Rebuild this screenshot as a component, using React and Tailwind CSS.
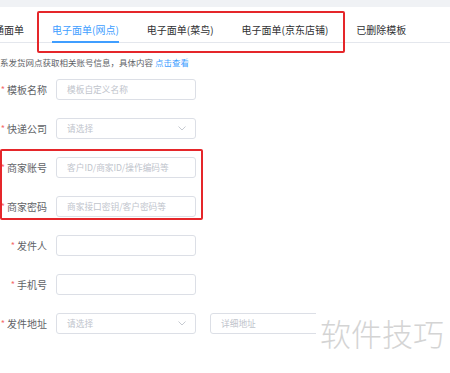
import React from "react";

const tabs = ["普通面单", "电子面单(网点)", "电子面单(菜鸟)", "电子面单(京东店铺)", "已删除模板"];

const Chevron = () => (
  <svg width="8" height="5" viewBox="0 0 8 5" className="ml-auto">
    <polyline points="0.5,0.5 4,4 7.5,0.5" fill="none" stroke="#c0c4cc" strokeWidth="0.9" />
  </svg>
);

const Field = ({ label, placeholder, select }) => (
  <div className="flex items-center">
    <div className="w-[47px] flex justify-end items-center text-[10px] text-[#606266] whitespace-nowrap">
      <span className="text-[#f56c6c] mr-[2px] text-[9px]">*</span>
      {label}
    </div>
    <div className="ml-[9px] w-[140px] h-[21px] flex items-center border border-[#dcdfe6] rounded-[3px] pl-[10px] pr-[9px] bg-white">
      <span className="text-[8.7px] text-[#c0c4cc] whitespace-nowrap">{placeholder}</span>
      {select && <Chevron />}
    </div>
  </div>
);

export default function App() {
  return (
    <div
      className="relative w-[450px] h-[373px] bg-white overflow-hidden"
      style={{ fontFamily: '"Noto Sans CJK SC", "Noto Sans", sans-serif' }}
    >
      <div className="h-[7px] bg-[#f0f2f5]" />

      {/* tabs */}
      <div className="flex h-[36px] border-b border-[#e4e7ed] -ml-[30px]">
        {tabs.map((t, i) => (
          <div
            key={t}
            className={
              "relative h-[35px] pt-[9px] px-[14px] flex items-center text-[10px] whitespace-nowrap " +
              (i === 1 ? "text-[#409eff]" : "text-[#303133]")
            }
          >
            {t}
            {i === 1 && <div className="absolute left-[14px] right-[14px] bottom-[-1px] h-[2px] bg-[#409eff]" />}
          </div>
        ))}
      </div>

      <div className="mt-[13px] h-[12px] leading-[12px] -ml-[17px] text-[8.5px] text-[#606266] whitespace-nowrap">
        请联系发货网点获取相关账号信息，具体内容 <span className="text-[#409eff]">点击查看</span>
      </div>

      {/* form */}
      <div className="mt-[11px] flex flex-col gap-[18px]">
        <Field label="模板名称" placeholder="模板自定义名称" />
        <Field label="快递公司" placeholder="请选择" select />
        <Field label="商家账号" placeholder="客户ID/商家ID/操作编码等" />
        <Field label="商家密码" placeholder="商家接口密钥/客户密码等" />
        <Field label="发件人" placeholder="" />
        <Field label="手机号" placeholder="" />
        <div className="flex items-center">
          <Field label="发件地址" placeholder="请选择" select />
          <div className="ml-[14px] w-[140px] h-[21px] flex items-center border border-[#dcdfe6] rounded-[3px] pl-[10px]">
            <span className="text-[8.7px] text-[#c0c4cc]">详细地址</span>
          </div>
        </div>
      </div>

      {/* red highlight boxes */}
      <div className="absolute left-[37px] top-[11px] w-[308px] h-[42px] border-2 border-[#e5262a] rounded-[2px]" />
      <div className="absolute left-[0px] top-[149px] w-[203px] h-[71px] border-2 border-[#e5262a] rounded-[2px]" />

      {/* watermark */}
      <div className="absolute left-[316px] top-[311px] pl-[4px] pr-[4px] bg-white text-[31px] leading-[44px] font-light text-[#d4d4d4] whitespace-nowrap">
        软件技巧
      </div>
    </div>
  );
}
